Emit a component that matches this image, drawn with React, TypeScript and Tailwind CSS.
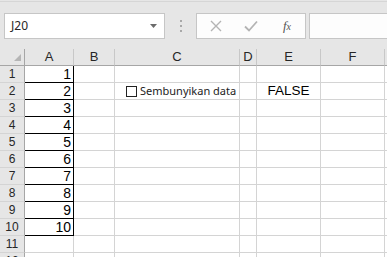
import React from "react";

const COLS = ["A", "B", "C", "D", "E", "F", ""];
const font = { fontFamily: '"Liberation Sans", Arial, sans-serif' };

function HeaderCell({ label, last }: { label: string; last?: boolean }) {
  return (
    <div className={`flex items-center justify-center border-b border-b-[#a6a6a6] ${last ? "" : "border-r border-r-[#c8c8c8]"} bg-[#e6e6e6] text-[13px] leading-4 text-[#262626]`}>
      {label}
    </div>
  );
}

export default function App() {
  const rows = Array.from({ length: 12 }, (_, i) => i + 1);
  return (
    <div className="relative h-[257px] w-[387px] overflow-hidden bg-white" style={font}>
      {/* toolbar */}
      <div className="flex h-[49px] items-center border-t-[1px] border-t-[#e6e6e6] bg-[#e6e6e6]">
        <div className="flex h-full w-full items-center border-t border-t-[#d6d6d6] pl-1">
          <div className="flex h-[26px] w-[161px] items-center justify-between border border-[#c6c6c6] bg-white pl-[6px] pr-[7px]">
            <span className="text-[12px] text-[#262626]" style={{ fontFamily: '"Noto Sans", "Open Sans", sans-serif' }}>J20</span>
            <svg width="7" height="4" viewBox="0 0 7 4"><path d="M0 0h7L3.5 4z" fill="#6b6b6b" /></svg>
          </div>
          <div className="ml-[15px] flex w-[2px] flex-col gap-[3px]">
            <div className="h-[2px] w-[2px] bg-[#a8a8a8]" />
            <div className="h-[2px] w-[2px] bg-[#a8a8a8]" />
            <div className="h-[2px] w-[2px] bg-[#a8a8a8]" />
          </div>
          <div className="ml-[14px] flex h-[26px] w-[110px] items-center border border-[#c6c6c6] bg-[#fdfdfd]">
            <div className="flex w-[36px] justify-center pl-[2px]">
              <svg width="12" height="12" viewBox="0 0 12 12"><path d="M1 1l10 10M11 1L1 11" stroke="#b4b4b4" strokeWidth="1.4" fill="none" /></svg>
            </div>
            <div className="flex w-[36px] justify-center">
              <svg width="14" height="12" viewBox="0 0 14 12"><path d="M1 6.5l4 4L13 1.5" stroke="#b4b4b4" strokeWidth="1.8" fill="none" /></svg>
            </div>
            <div className="flex w-[36px] justify-center">
              <span className="text-[13px] italic text-[#555]" style={{ fontFamily: '"Liberation Serif", serif' }}>f<span className="text-[10px]">x</span></span>
            </div>
          </div>
          <div className="ml-[3px] h-[26px] flex-1 border border-r-0 border-[#c6c6c6] bg-[#fdfdfd]" />
        </div>
      </div>

      {/* grid */}
      <div className="grid grid-cols-[25px_49px_41px_125px_17px_64px_64px_64px] auto-rows-[17px]">
        <div className="relative border-b border-r border-b-[#a6a6a6] border-r-[#a6a6a6] bg-[#e6e6e6]">
          <svg className="absolute left-[14px] top-[5px]" width="7" height="7" viewBox="0 0 7 7"><path d="M7 0V7H0z" fill="#b5b5b5" /></svg>
        </div>
        {COLS.map((c, i) => (
          <HeaderCell key={i} label={c} last={i === COLS.length - 1} />
        ))}
        {rows.map((r) => (
          <React.Fragment key={r}>
            <div className="flex items-center justify-center border-b border-r border-b-[#d4d4d4] border-r-[#a6a6a6] bg-[#e6e6e6] text-[12px] leading-4 text-[#262626]">
              {r}
            </div>
            <div className={`flex items-center justify-end pr-[2px] text-[14px] leading-4 text-black border-r border-b ${r <= 10 ? "border-black" : "border-[#d4d4d4]"}`}>
              {r <= 10 ? r : ""}
            </div>
            <div className="border-b border-r border-[#d4d4d4]" />
            <div className="flex items-center border-b border-r border-[#d4d4d4] pl-[11px]">
              {r === 2 && (
                <div className="flex items-center">
                  <div className="h-[11px] w-[11px] border border-[#222] bg-white" />
                  <span className="ml-[3px] text-[11px] leading-4 text-[#222]" style={{ fontFamily: '"Noto Sans", "Open Sans", sans-serif' }}>Sembunyikan data</span>
                </div>
              )}
            </div>
            <div className="border-b border-r border-[#d4d4d4]" />
            <div className="flex items-center justify-center border-b border-r border-[#d4d4d4] text-[13.5px] leading-4 text-black">
              {r === 2 ? "FALSE" : ""}
            </div>
            <div className="border-b border-r border-[#d4d4d4]" />
            <div className="border-b border-r border-[#d4d4d4]" />
          </React.Fragment>
        ))}
      </div>
    </div>
  );
}
